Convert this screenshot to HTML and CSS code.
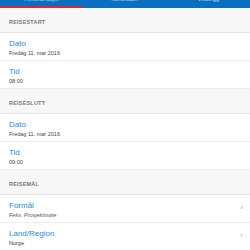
FILE: index.html
```html
<!DOCTYPE html>
<html lang="nb">
<head>
<meta charset="UTF-8"/>
<meta name="viewport" content="width=device-width,initial-scale=1.0"/>
<title>Reise</title>
<link rel="stylesheet" href="styles.css">
</head>
<body>

<!-- tabs -->
<div class="tabs">
  <div class="tab active"><span>Reisedetaljer</span></div>
  <div class="tab"><span>Kostnader</span></div>
  <div class="tab"><span>Vedlegg</span></div>
</div>

<div class="section">Reisestart</div>
<div class="row"><div class="title">Dato</div><div class="sub">Fredag 11. mar 2016</div></div>
<div class="row"><div class="title">Tid</div><div class="sub">08:00</div></div>

<div class="section">Reiseslutt</div>
<div class="row"><div class="title">Dato</div><div class="sub">Fredag 11. mar 2016</div></div>
<div class="row"><div class="title">Tid</div><div class="sub">09:00</div></div>

<div class="section">Reisemål</div>
<div class="row link"><div class="title">Formål</div><div class="sub hint">Feks. Prosjektmøte</div><span class="chev">›</span></div>
<div class="row link"><div class="title">Land/Region</div><div class="sub">Norge</div><span class="chev">›</span></div>

</body>
</html>
```

FILE: styles.css
```css
*{margin:0;padding:0;box-sizing:border-box}
body{background:#fff;color:#333;font-family:"Liberation Sans",Arial,sans-serif;overflow:hidden}

/* ---------- tabs ---------- */
.tabs{display:flex;height:8px;background:#0b6fc0;overflow:hidden}
.tab{flex:1;display:flex;justify-content:center;position:relative}
.tab span{font-size:6px;color:#b9d6f0;margin-top:-5px;line-height:8px}
.tab.active::after{content:'';position:absolute;left:0;right:0;bottom:0;height:2px;background:#e2252f}

/* ---------- section header ---------- */
.section{
  height:25px;padding:3px 9px 0;display:flex;align-items:center;
  background:#f7f7f7;border-bottom:1px solid #e4e4e4;
  font-size:5.5px;font-weight:bold;color:#777;text-transform:uppercase;letter-spacing:.2px
}

/* ---------- rows ---------- */
.row{
  height:28px;padding:6px 9px 0;position:relative;
  border-bottom:1px solid #ececec
}
.title{font-size:8px;line-height:10px;color:#2b8ad6}
.sub{font-size:5.5px;line-height:8px;color:#444}
.sub.hint{font-style:italic;color:#555}
.chev{position:absolute;right:7px;top:8px;font-size:8px;color:#aaa}
```
